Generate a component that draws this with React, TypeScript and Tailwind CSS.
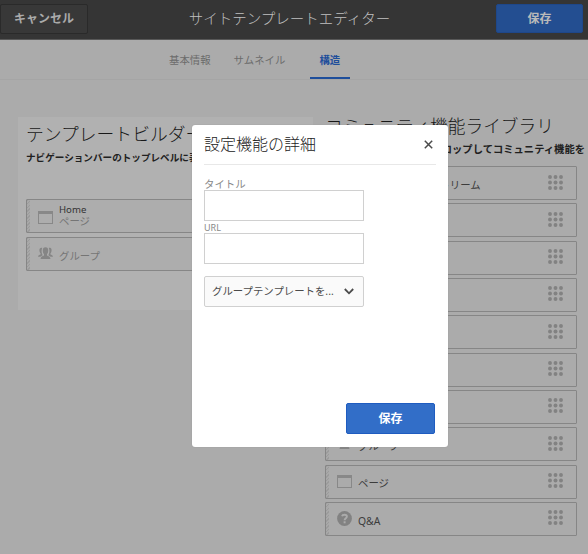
import React from "react";

type Kind = "page" | "group" | "help" | "none";

function ItemIcon({ kind }: { kind: Kind }) {
  if (kind === "page") {
    return (
      <svg width="15" height="13" viewBox="0 0 15 13" className="text-[#888]">
        <path d="M0 0h15v13H0zM1 3v9h13V3z" fill="currentColor" fillRule="evenodd" />
      </svg>
    );
  }
  if (kind === "group") {
    return (
      <svg width="15" height="13" viewBox="0 0 15 13" className="text-[#858585]" fill="currentColor">
        <path d="M7.500 0.300C9.400.3 10.300 1.500 10.200 3.500c0 1.800-.5 3-1.200 3.800v1.300c1.500.6 3.200 1 3.500 3.400h-10c.3-2.400 2-2.800 3.500-3.400V7.300C5.300 6.500 4.800 5.300 4.800 3.500 4.700 1.500 5.600.3 7.500.3z" />
        <path d="M4.200 1C3.500.7 2.200.8 1.700 1.800c-.6 1.300-.2 3.400.8 4.500v1.200C1.500 8 .2 8 0 9.800h2.400c.6-.8 1.500-1.200 2.300-1.600C3.500 6.400 3.200 3 4.200 1zM10.800 1c.7-.3 2-.2 2.500.8.600 1.300.2 3.400-.8 4.500v1.200c1 .5 2.300.5 2.500 2.300h-2.400c-.6-.8-1.500-1.200-2.300-1.600 1.200-1.800 1.500-5.200.5-7.200z" />
      </svg>
    );
  }
  if (kind === "help") {
    return (
      <svg width="15" height="15" viewBox="0 0 15 15">
        <circle cx="7.500" cy="7.500" r="7.400" fill="#828282" />
        <path d="M5 5.200C5.400 3.300 9.900 3 9.900 5.500c0 1.700-2.300 1.700-2.300 3.700" fill="none" stroke="#ababab" strokeWidth="1.900" />
        <rect x="6.600" y="10.300" width="2" height="2" fill="#ababab" />
      </svg>
    );
  }
  return null;
}

function Grip() {
  return (
    <svg width="15" height="15" viewBox="0 0 15 15" fill="#828282" className="mb-[2px]">
      {[2, 7.5, 13].map((y) => [2, 7.5, 13].map((x) => <circle key={`${x}-${y}`} cx={x} cy={y} r="1.950" />))}
    </svg>
  );
}

function Hatch() {
  return (
    <span className="h-full w-[3px] shrink-0 bg-[repeating-linear-gradient(135deg,#9b9b9b_0px,#9b9b9b_1px,#a8a8a8_1px,#a8a8a8_2.500px)]" />
  );
}

const library: { label: string; kind: Kind }[] = [
  { label: "アクティビティストリーム", kind: "none" },
  { label: "割り当て", kind: "none" },
  { label: "ブログ", kind: "none" },
  { label: "カレンダー", kind: "none" },
  { label: "カタログ", kind: "none" },
  { label: "ファイル", kind: "none" },
  { label: "フォーラム", kind: "none" },
  { label: "グループ", kind: "group" },
  { label: "ページ", kind: "page" },
  { label: "Q&A", kind: "help" },
];

function LibraryItem({ label, kind }: { label: string; kind: Kind }) {
  return (
    <li className="flex h-[34px] items-center rounded-[1px] border border-[#868686] pr-[13px]">
      <Hatch />
      <span className="ml-[8px] flex w-[15px] pb-[1px]">
        <ItemIcon kind={kind} />
      </span>
      <span className="ml-[6px] grow pt-[4px] text-[10.4px] leading-none text-[#3c3c3c]">{label}</span>
      <Grip />
    </li>
  );
}

function Header() {
  return (
    <header className="flex h-[40px] items-center justify-between border-b border-[#585858] bg-[#353535]">
      <button className="mb-[2px] h-[30px] w-[88px] rounded-[2px] border border-[#2a2a2a] bg-[#383838] text-[12px] font-bold text-[#aaa]">
        キャンセル
      </button>
      <h1 className="mr-[5px] pb-[2px] text-[14.500px] font-light whitespace-nowrap text-[#c0c0c0]">
        サイトテンプレートエディター
      </h1>
      <button className="mr-[5px] mb-[2px] h-[29px] w-[87px] rounded-[2px] border border-[#1e478a] bg-[#234e91] text-[12px] font-bold text-[#b9b9b9]">
        保存
      </button>
    </header>
  );
}

function Tabs() {
  return (
    <nav className="flex h-[40px] border-b border-[#a5a5a5] pl-[169px] text-[10.4px] leading-[40px] text-[#6c6c6c]">
      <span>基本情報</span>
      <span className="ml-[23px]">サムネイル</span>
      <span className="ml-[24.500px] h-[39px] w-[40px] border-b-2 border-[#1e4e9b] text-center font-bold text-[#1e4e9b]">構造</span>
    </nav>
  );
}

function Builder() {
  return (
    <section className="mt-[37px] h-[193px] w-[295px] shrink-0 overflow-hidden bg-[#b1b1b1] pl-[8px]">
      <h2 className="mt-[6px] text-[17.8px] leading-[23px] font-light whitespace-nowrap text-[#181818]">テンプレートビルダー</h2>
      <p className="mt-[5px] text-[9.6px] leading-[14px] font-bold whitespace-nowrap text-[#202020]">
        ナビゲーションバーのトップレベルに表示する機能
      </p>
      <ul className="mt-[34px] mr-[8px] flex flex-col gap-[4px]">
        <li className="flex h-[34px] items-center rounded-[1px] border border-[#868686] bg-[#adadad]">
          <Hatch />
          <span className="ml-[8px] flex w-[15px] pt-[3px]">
            <ItemIcon kind="page" />
          </span>
          <span className="ml-[6px] flex flex-col text-[10.4px] leading-[12px] text-[#757575]">
            <span className="text-[9.6px] leading-[10px] text-[#333]">Home</span>
            <span>ページ</span>
          </span>
        </li>
        <li className="flex h-[34px] items-center rounded-[1px] border border-[#868686] bg-[#adadad]">
          <Hatch />
          <span className="ml-[8px] flex w-[15px] pb-[1px]">
            <ItemIcon kind="group" />
          </span>
          <span className="ml-[6px] pt-[5px] text-[10.4px] leading-none text-[#757575]">グループ</span>
        </li>
      </ul>
    </section>
  );
}

function Library() {
  return (
    <section className="ml-[12px] w-[260px] shrink-0 pt-[35px]">
      <h2 className="text-[17.700px] leading-[23px] font-light whitespace-nowrap text-[#181818]">コミュニティ機能ライブラリ</h2>
      <p className="mt-[4px] flex justify-end text-[10.300px] leading-[14px] font-bold whitespace-nowrap text-[#202020]">
        機能を左側にドラッグ&amp;ドロップしてコミュニティ機能を
      </p>
      <ul className="mt-[10px] flex w-[252px] flex-col gap-[3.330px]">
        {library.map((item) => (
          <LibraryItem key={item.label} {...item} />
        ))}
      </ul>
    </section>
  );
}

function Dialog() {
  return (
    <div
      role="dialog"
      className="absolute top-[125px] left-[192px] flex h-[322px] w-[256px] flex-col rounded-[3px] bg-white px-[12px] shadow-[0_0_1px_#888]"
    >
      <div className="flex h-[40px] shrink-0 items-center justify-between border-b border-[#e8e8e8]">
        <h2 className="pb-[2px] text-[16px] font-light text-[#222]">設定機能の詳細</h2>
        <svg width="9" height="9" viewBox="0 0 9 9" className="mr-[3px]">
          <path d="M.8.800l7.400 7.400M8.200.800L.8 8.200" stroke="#4b4b4b" strokeWidth="1.500" />
        </svg>
      </div>
      <label className="mt-[12px] h-[13px] text-[10.400px] leading-[14px] text-[#888]">タイトル</label>
      <input className="h-[31px] w-[160px] shrink-0 border border-[#d0d0d0]" />
      <label className="h-[12px] text-[9px] leading-[13px] text-[#888]">URL</label>
      <input className="h-[31px] w-[160px] shrink-0 border border-[#d0d0d0]" />
      <button className="mt-[12px] flex h-[31px] w-[160px] shrink-0 items-center justify-between rounded-[2px] border border-[#d0d0d0] bg-[#fafafa] pr-[9px] pl-[7px] text-[10.400px] text-[#4b4b4b]">
        <span className="whitespace-nowrap">グループテンプレートを...</span>
        <svg width="10" height="7" viewBox="0 0 10 7" fill="none" stroke="#4b4b4b" strokeWidth="1.800">
          <path d="M.8 1L5 5.300 9.200 1" />
        </svg>
      </button>
      <button className="mt-auto mr-[1px] mb-[13px] h-[31px] w-[89px] shrink-0 self-end rounded-[2px] border border-[#1f5cc0] bg-[#326ec8] text-[12px] font-bold text-white">
        保存
      </button>
    </div>
  );
}

export default function App() {
  return (
    <div className="relative h-[554px] w-[588px] overflow-hidden bg-[#ababab] font-['Noto_Sans','Noto_Sans_CJK_JP',sans-serif]">
      <Header />
      <Tabs />
      <main className="flex pl-[18px]">
        <Builder />
        <Library />
      </main>
      <Dialog />
    </div>
  );
}
